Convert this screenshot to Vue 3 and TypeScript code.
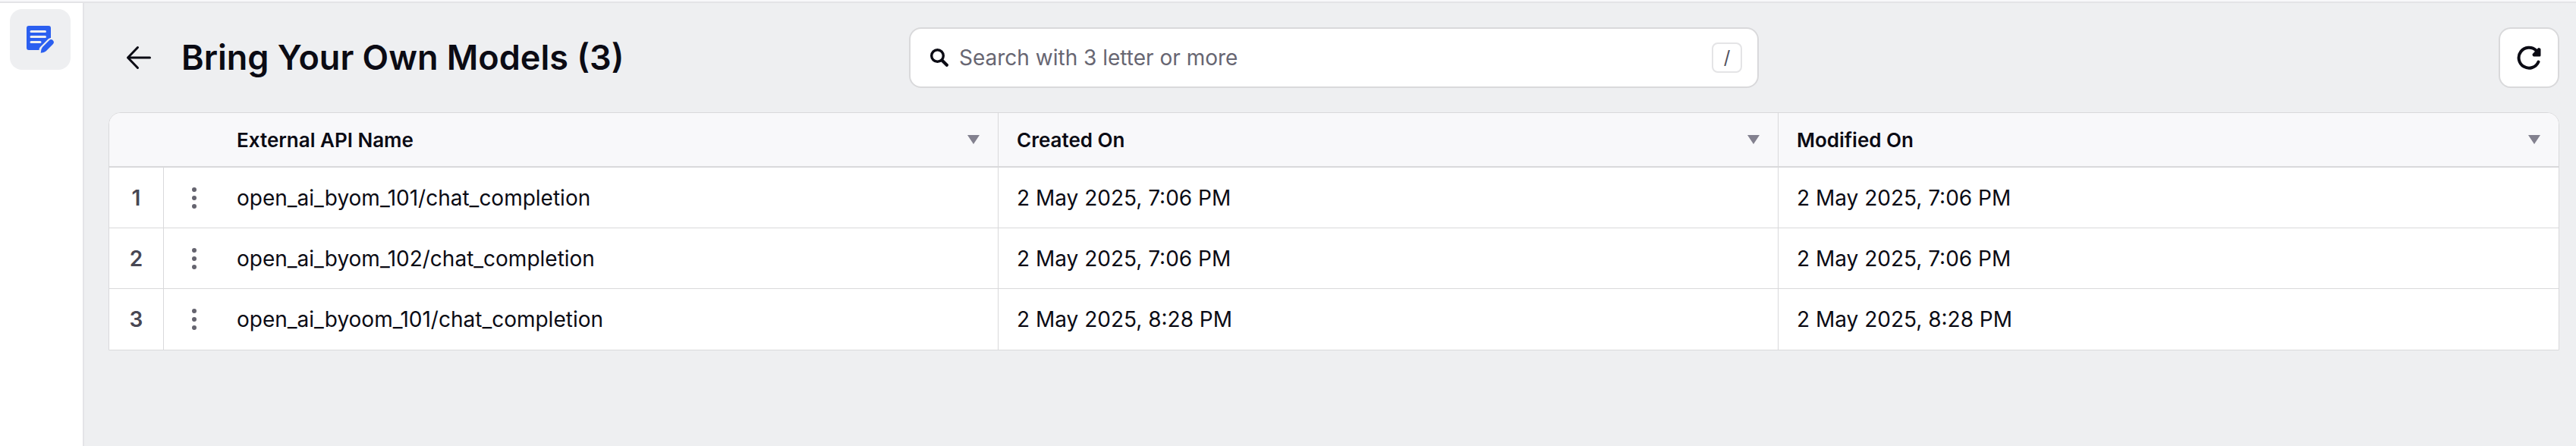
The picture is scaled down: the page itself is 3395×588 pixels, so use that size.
<script setup lang="ts">
import { ref, computed } from 'vue'

interface Model {
  name: string
  created: string
  modified: string
}

const models: Model[] = [
  { name: 'open_ai_byom_101/chat_completion', created: '2 May 2025, 7:06 PM', modified: '2 May 2025, 7:06 PM' },
  { name: 'open_ai_byom_102/chat_completion', created: '2 May 2025, 7:06 PM', modified: '2 May 2025, 7:06 PM' },
  { name: 'open_ai_byoom_101/chat_completion', created: '2 May 2025, 8:28 PM', modified: '2 May 2025, 8:28 PM' },
]

const columns: string[] = ['External API Name', 'Created On', 'Modified On']

const query = ref('')

const visible = computed<Model[]>(() => {
  const term = query.value.trim().toLowerCase()
  return term.length < 3 ? models : models.filter((m) => m.name.toLowerCase().includes(term))
})
</script>

<template>
  <div class="shell">
    <nav class="rail" aria-label="Sections">
      <button class="rail-item" type="button" aria-label="Models">
        <svg width="40" height="40" viewBox="0 0 40 40" aria-hidden="true">
          <path
            fill="#2b5ff0"
            d="M5 2H31Q34 2 34 5V18Q32 18 30.500 19.500L20 30Q18.500 31.500 18.500 34H5Q2 34 2 31V5Q2 2 5 2Z"
          />
          <path d="M8 9.500H26.500M8 16.500H26.500M8 23.500H20" stroke="#eeeff1" stroke-width="3" stroke-linecap="round" />
          <path
            fill="#2b5ff0"
            d="M32 21Q34.500 19 36.800 21.200Q39 23.500 37 26L27.500 35.500Q25.500 37.500 21 37.800Q20.500 37.700 20.800 37Q21 32.500 23 30Z"
          />
        </svg>
      </button>
    </nav>

    <main class="content">
      <header class="bar">
        <div class="heading">
          <button class="back" type="button" aria-label="Back">
            <svg width="36" height="36" viewBox="0 0 36 36" aria-hidden="true">
              <path
                d="M32.500 18H3.500M16.500 4.500L3.500 18L16.500 31.500"
                fill="none"
                stroke="#0b0b14"
                stroke-width="3"
                stroke-linecap="round"
                stroke-linejoin="round"
              />
            </svg>
          </button>
          <h1>Bring Your Own Models (3)</h1>
        </div>

        <label class="search">
          <svg width="24" height="24" viewBox="0 0 24 24" aria-hidden="true">
            <circle cx="9.500" cy="9.500" r="7.800" fill="none" stroke="#0b0b14" stroke-width="3.400" />
            <path d="M15.500 15.500L21.800 21.800" stroke="#0b0b14" stroke-width="4.200" stroke-linecap="round" />
          </svg>
          <input v-model="query" type="text" placeholder="Search with 3 letter or more" aria-label="Search models" />
          <kbd>/</kbd>
        </label>

        <button class="refresh" type="button" aria-label="Refresh">
          <svg width="32" height="32" viewBox="0 0 32 32" aria-hidden="true">
            <path
              d="M28.500 21.500A13.500 13.500 0 1 1 25.500 6.500"
              fill="none"
              stroke="#0b0b14"
              stroke-width="4"
              stroke-linecap="round"
            />
            <path
              d="M30 5V13H22.500L22 12L29 4.500Z"
              fill="#0b0b14"
              stroke="#0b0b14"
              stroke-width="3"
              stroke-linejoin="round"
            />
          </svg>
        </button>
      </header>

      <div class="grid">
        <table>
          <colgroup>
            <col class="col-number" />
            <col class="col-menu" />
            <col v-for="column in columns" :key="column" />
          </colgroup>
          <thead>
            <tr>
              <th class="open"></th>
              <th class="open"></th>
              <th v-for="column in columns" :key="column" scope="col">
                <div class="head">
                  <span>{{ column }}</span>
                  <button type="button" :aria-label="`${column} options`">
                    <svg width="16" height="12" viewBox="0 0 16 12" aria-hidden="true">
                      <path d="M0 0H16L8 12Z" fill="#83818f" />
                    </svg>
                  </button>
                </div>
              </th>
            </tr>
          </thead>
          <tbody>
            <tr v-for="(model, index) in visible" :key="model.name">
              <td class="number">{{ index + 1 }}</td>
              <td class="menu open">
                <button type="button" :aria-label="`Actions for ${model.name}`">
                  <svg width="6" height="28" viewBox="0 0 6 28" fill="#65646f" aria-hidden="true">
                    <circle cx="3" cy="3" r="3" />
                    <circle cx="3" cy="14" r="3" />
                    <circle cx="3" cy="25" r="3" />
                  </svg>
                </button>
              </td>
              <td>{{ model.name }}</td>
              <td>{{ model.created }}</td>
              <td>{{ model.modified }}</td>
            </tr>
          </tbody>
        </table>
      </div>
    </main>
  </div>
</template>

<style>
body {
  margin: 0;
  background: #eeeff1;
}
</style>

<style scoped>
.shell {
  display: flex;
  box-sizing: border-box;
  min-height: 100vh;
  border-top: 2px solid #f8f8fa;
  background: #eeeff1;
  color: #0b0b14;
  font-family: Inter, 'Liberation Sans', sans-serif;
  font-size: 28px;
}

button {
  display: flex;
  align-items: center;
  justify-content: center;
  margin: 0;
  padding: 0;
  border: 0;
  background: none;
  color: inherit;
  cursor: pointer;
}

svg {
  display: block;
  flex: none;
}

.rail {
  flex: none;
  box-sizing: border-box;
  width: 111px;
  padding: 8px 16px 8px 13px;
  border-top: 2px solid #e4e4e7;
  border-right: 2px solid #e4e4e7;
  background: #ffffff;
}

.rail-item {
  width: 80px;
  height: 80px;
  border-radius: 16px;
  background: #eeeff1;
}

.content {
  flex: 1;
  min-width: 0;
  padding: 32px 22px 32px 32px;
  border-top: 2px solid #e4e4e7;
}

.bar {
  display: grid;
  grid-template-columns: 1fr minmax(0, 1120px) 1fr;
  align-items: center;
  margin-bottom: 32px;
}

.heading {
  display: flex;
  align-items: center;
  gap: 38px;
  padding-left: 22px;
}

.back {
  width: 36px;
  height: 36px;
}

h1 {
  margin: 0;
  font-size: 45px;
  font-weight: 600;
  line-height: 60px;
  white-space: nowrap;
}

.search {
  display: flex;
  align-items: center;
  gap: 14px;
  box-sizing: border-box;
  height: 80px;
  padding: 0 20px 0 26px;
  border: 2px solid #d9d9db;
  border-radius: 16px;
  background: #ffffff;
}

.search input {
  flex: 1;
  min-width: 0;
  padding: 0;
  border: 0;
  outline: 0;
  background: none;
  color: inherit;
  font: inherit;
}

.search input::placeholder {
  color: #676672;
  opacity: 1;
}

kbd {
  box-sizing: border-box;
  width: 40px;
  height: 40px;
  border: 2px solid #e4e4e6;
  border-radius: 8px;
  color: #50505c;
  font-family: inherit;
  font-size: 24px;
  line-height: 36px;
  text-align: center;
}

.refresh {
  justify-self: end;
  box-sizing: border-box;
  width: 80px;
  height: 80px;
  border: 2px solid #d9d9db;
  border-radius: 16px;
  background: #ffffff;
}

.grid {
  overflow: hidden;
  border: 1px solid #d9d9db;
  border-radius: 16px 16px 0 0;
  background: #ffffff;
}

table {
  width: 100%;
  border-collapse: separate;
  border-spacing: 0;
  table-layout: fixed;
}

.col-number,
.col-menu {
  width: 72px;
}

th,
td {
  box-sizing: border-box;
  padding: 0 24px;
  border-right: 1px solid #d9d9db;
  text-align: left;
}

th {
  height: 72px;
  border-bottom: 2px solid #d9d9db;
  background: #f8f8fa;
  font-size: 26px;
  font-weight: 600;
}

td {
  height: 80px;
  border-bottom: 1px solid #d9d9db;
  line-height: 34px;
}

.open,
th:last-child,
td:last-child {
  border-right: 0;
}

tbody tr:last-child td {
  border-bottom: 0;
}

.head {
  display: flex;
  align-items: center;
  justify-content: space-between;
}

.number {
  padding: 0;
  color: #484753;
  font-weight: 600;
  text-align: center;
}

.menu {
  padding: 0;
}

.menu button {
  width: 100%;
  padding-left: 8px;
}
</style>
